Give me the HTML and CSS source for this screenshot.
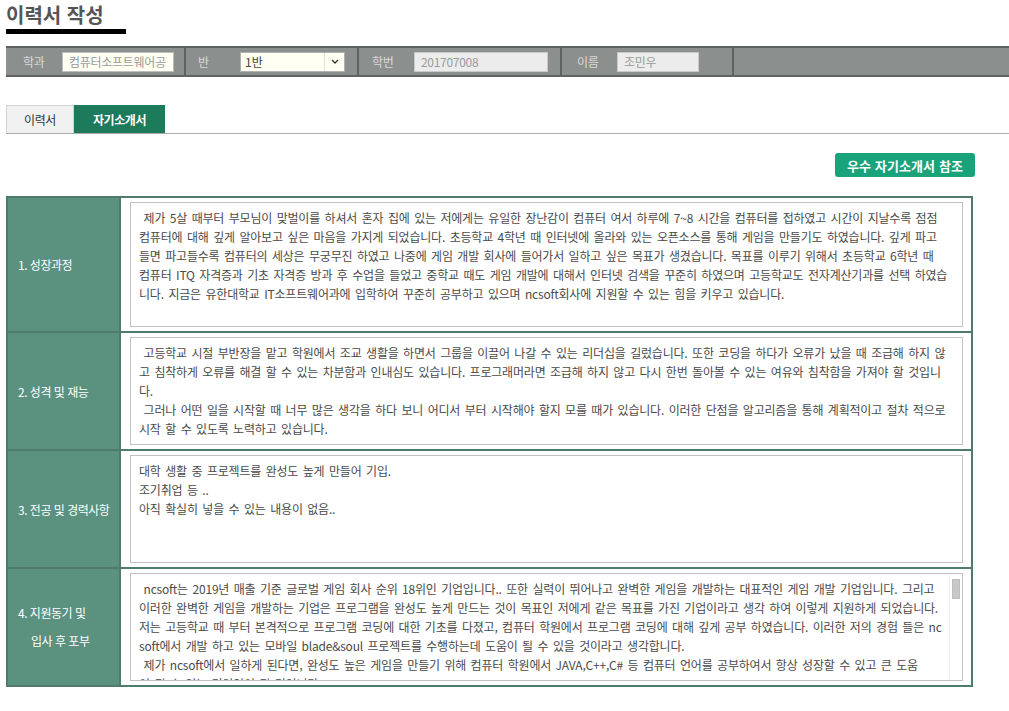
FILE: index.html
```html
<!DOCTYPE html>
<html lang="ko">
<head>
<meta charset="utf-8">
<title>이력서 작성</title>
<link rel="stylesheet" href="styles.css">
</head>
<body>
<div class="page">
  <h1 class="page-title">이력서 작성</h1>

  <div class="info-bar">
    <div class="info-cell cell-dept">
      <span class="info-label label-dept">학과</span>
      <input class="info-input input-cream dept-input" type="text" value="컴퓨터소프트웨어공학과">
    </div>
    <div class="info-cell cell-class">
      <span class="info-label label-class">반</span>
      <div class="select-box">
        <select class="class-select"><option>1반</option><option>2반</option></select>
        <span class="select-arrow"><svg width="8" height="5" viewBox="0 0 8 5"><path d="M1 1l3 3 3-3" fill="none" stroke="#333" stroke-width="1.3"/></svg></span>
      </div>
    </div>
    <div class="info-cell cell-id">
      <span class="info-label label-id">학번</span>
      <input class="info-input input-readonly id-input" type="text" value="201707008" readonly>
    </div>
    <div class="info-cell cell-name">
      <span class="info-label label-name">이름</span>
      <input class="info-input input-readonly name-input" type="text" value="조민우" readonly>
    </div>
    <div class="info-cell cell-rest"></div>
  </div>

  <div class="tabs">
    <a class="tab tab-resume">이력서</a>
    <a class="tab tab-active">자기소개서</a>
  </div>

  <div class="actions">
    <button class="ref-btn" type="button">우수 자기소개서 참조</button>
  </div>

  <table class="intro-table">
    <tr class="row-first">
      <td class="label-cell">1. 성장과정</td>
      <td class="content-cell"><textarea class="intro-text ta-tall" readonly> 제가 5살 때부터 부모님이 맞벌이를 하셔서 혼자 집에 있는 저에게는 유일한 장난감이 컴퓨터 여서 하루에 7~8 시간을 컴퓨터를 접하였고 시간이 지날수록 점점
컴퓨터에 대해 깊게 알아보고 싶은 마음을 가지게 되었습니다. 초등학교 4학년 때 인터넷에 올라와 있는 오픈소스를 통해 게임을 만들기도 하였습니다. 깊게 파고
들면 파고들수록 컴퓨터의 세상은 무궁무진 하였고 나중에 게임 개발 회사에 들어가서 일하고 싶은 목표가 생겼습니다. 목표를 이루기 위해서 초등학교 6학년 때
컴퓨터 ITQ 자격증과 기초 자격증 방과 후 수업을 들었고 중학교 때도 게임 개발에 대해서 인터넷 검색을 꾸준히 하였으며 고등학교도 전자계산기과를 선택 하였습
니다. 지금은 유한대학교 IT소프트웨어과에 입학하여 꾸준히 공부하고 있으며 ncsoft회사에 지원할 수 있는 힘을 키우고 있습니다.</textarea></td>
    </tr>
    <tr>
      <td class="label-cell">2. 성격 및 재능</td>
      <td class="content-cell"><textarea class="intro-text" readonly> 고등학교 시절 부반장을 맡고 학원에서 조교 생활을 하면서 그룹을 이끌어 나갈 수 있는 리더십을 길렀습니다. 또한 코딩을 하다가 오류가 났을 때 조급해 하지 않
고 침착하게 오류를 해결 할 수 있는 차분함과 인내심도 있습니다. 프로그래머라면 조급해 하지 않고 다시 한번 돌아볼 수 있는 여유와 침착함을 가져야 할 것입니
다.
 그러나 어떤 일을 시작할 때 너무 많은 생각을 하다 보니 어디서 부터 시작해야 할지 모를 때가 있습니다. 이러한 단점을 알고리즘을 통해 계획적이고 절차 적으로
시작 할 수 있도록 노력하고 있습니다.</textarea></td>
    </tr>
    <tr>
      <td class="label-cell">3. 전공 및 경력사항</td>
      <td class="content-cell"><textarea class="intro-text" readonly>대학 생활 중 프로젝트를 완성도 높게 만들어 기입.
조기취업 등 ..
아직 확실히 넣을 수 있는 내용이 없음..</textarea></td>
    </tr>
    <tr>
      <td class="label-cell label-two">
        <span class="label-line">4. 지원동기 및</span>
        <span class="label-line label-indent">입사 후 포부</span>
      </td>
      <td class="content-cell">
        <div class="scroll-wrap">
          <textarea class="intro-text ta-scroll" readonly> ncsoft는 2019년 매출 기준 글로벌 게임 회사 순위 18위인 기업입니다.. 또한 실력이 뛰어나고 완벽한 게임을 개발하는 대표적인 게임 개발 기업입니다. 그리고
이러한 완벽한 게임을 개발하는 기업은 프로그램을 완성도 높게 만드는 것이 목표인 저에게 같은 목표를 가진 기업이라고 생각 하여 이렇게 지원하게 되었습니다.
저는 고등학교 때 부터 본격적으로 프로그램 코딩에 대한 기초를 다졌고, 컴퓨터 학원에서 프로그램 코딩에 대해 깊게 공부 하였습니다. 이러한 저의 경험 들은 nc
soft에서 개발 하고 있는 모바일 blade&amp;soul 프로젝트를 수행하는데 도움이 될 수 있을 것이라고 생각합니다.
 제가 ncsoft에서 일하게 된다면, 완성도 높은 게임을 만들기 위해 컴퓨터 학원에서 JAVA,C++,C# 등 컴퓨터 언어를 공부하여서 항상 성장할 수 있고 큰 도움
이 될 수 있는 기업인이 될 것입니다.</textarea>
          <div class="fake-scrollbar" aria-hidden="true"><div class="fake-thumb"></div></div>
        </div>
      </td>
    </tr>
  </table>
</div>
</body>
</html>
```

FILE: styles.css
```css
* {
  box-sizing: border-box;
}

html,
body {
  margin: 0;
  padding: 0;
  background: #ffffff;
}

body {
  font-family: "Noto Sans CJK KR", "Noto Sans", sans-serif;
  font-size: 12px;
  color: #444444;
}

.page {
  padding: 0 0 20px 6px;
}

/* title */
.page-title {
  margin: 0;
  width: 120px;
  font-size: 20px;
  line-height: 29px;
  font-weight: 700;
  color: #555555;
  letter-spacing: 0;
  white-space: nowrap;
  border-bottom: 5px solid #000000;
}

/* info bar */
.info-bar {
  display: flex;
  margin-top: 12px;
  height: 31px;
  background: #8b8f8d;
  border-top: 2px solid #5e6261;
  border-bottom: 2px solid #5e6261;
}

.info-cell {
  display: flex;
  align-items: center;
  border-right: 2px solid #5e6261;
}

.cell-dept { width: 180px; padding-left: 17px; }
.cell-class { width: 173px; padding-left: 12px; }
.cell-id { width: 203px; padding-left: 13px; }
.cell-name { width: 172px; padding-left: 15px; }
.cell-rest { flex: 1; border-right: 0; }

.info-label {
  flex: none;
  color: #dadada;
  font-size: 12px;
  letter-spacing: -0.4px;
}

.label-dept { width: 39px; }
.label-class { width: 42px; }
.label-id { width: 42px; }
.label-name { width: 40px; }

.info-input {
  height: 20px;
  border: 1px solid #bdbdbd;
  padding: 0 6px;
  font-family: inherit;
  font-size: 12px;
  letter-spacing: -0.3px;
  color: #9a9a9a;
  outline: none;
}

.input-cream {
  background: #fffff4;
}

.input-readonly {
  background: #ececec;
  border-color: #c9c9c9;
}

.dept-input { width: 112px; }
.id-input { width: 134px; }
.name-input { width: 82px; }

.select-box {
  display: flex;
  width: 105px;
  height: 20px;
  border: 1px solid #b0b0b0;
  background: #fffff4;
}

.class-select {
  flex: 1;
  min-width: 0;
  -webkit-appearance: none;
  appearance: none;
  border: 0;
  background: transparent;
  font-family: inherit;
  font-size: 12px;
  color: #444444;
  padding: 0 4px;
  height: 18px;
  outline: none;
}

.select-arrow {
  flex: none;
  width: 20px;
  display: flex;
  align-items: center;
  justify-content: center;
  border-left: 1px solid #e2e2da;
}

/* tabs */
.tabs {
  display: flex;
  margin-top: 28px;
  height: 29px;
  border-bottom: 1px solid #ababab;
}

.tab {
  display: flex;
  align-items: center;
  justify-content: center;
  height: 28px;
  font-size: 12px;
  letter-spacing: -0.4px;
  cursor: pointer;
}

.tab-resume {
  width: 68px;
  background: #f1f1f1;
  border: 1px solid #d2d2d2;
  border-bottom: 0;
  color: #333333;
}

.tab-active {
  width: 91px;
  background: #1d7a5a;
  color: #ffffff;
  font-weight: 700;
}

/* actions */
.actions {
  display: flex;
  justify-content: flex-end;
  width: 969px;
  margin-top: 19px;
}

.ref-btn {
  width: 140px;
  height: 24px;
  border: 0;
  border-radius: 3px;
  background: #18a37b;
  color: #ffffff;
  font-family: inherit;
  font-size: 13px;
  font-weight: 700;
  letter-spacing: 0.1px;
  padding: 0;
  cursor: pointer;
}

/* table */
.intro-table {
  margin-top: 19px;
  width: 967px;
  border-collapse: collapse;
  border: 2px solid #4f7b6f;
}

.intro-table td {
  border: 2px solid #4f7b6f;
}

.label-cell {
  width: 113px;
  background: #5a917f;
  color: #ffffff;
  font-size: 12px;
  letter-spacing: -0.5px;
  padding-left: 10px;
  white-space: nowrap;
  vertical-align: middle;
}

.label-line {
  display: block;
  line-height: 28px;
}

.label-indent {
  padding-left: 13px;
}

.content-cell {
  padding: 4px 8px 4px 9px;
  background: #ffffff;
}

.intro-text {
  display: block;
  width: 100%;
  height: 108px;
  margin: 0;
  border: 1px solid #c2c2c2;
  padding: 5px 8px;
  font-family: inherit;
  font-size: 12px;
  line-height: 19px;
  letter-spacing: -0.2px;
  word-spacing: 1.4px;
  color: #4a4a4a;
  background: #ffffff;
  white-space: pre;
  overflow: hidden;
  resize: none;
  outline: none;
}

.ta-tall {
  height: 125px;
}

.scroll-wrap {
  position: relative;
}

.ta-scroll {
  padding-right: 22px;
}

.fake-scrollbar {
  position: absolute;
  top: 1px;
  right: 1px;
  bottom: 1px;
  width: 13px;
  background: #ffffff;
  border-left: 1px solid #f0f0f0;
}

.fake-thumb {
  margin: 5px 0 0 2px;
  width: 8px;
  height: 20px;
  background: #c8c8c8;
  border: 1px solid #bdbdbd;
}
```
